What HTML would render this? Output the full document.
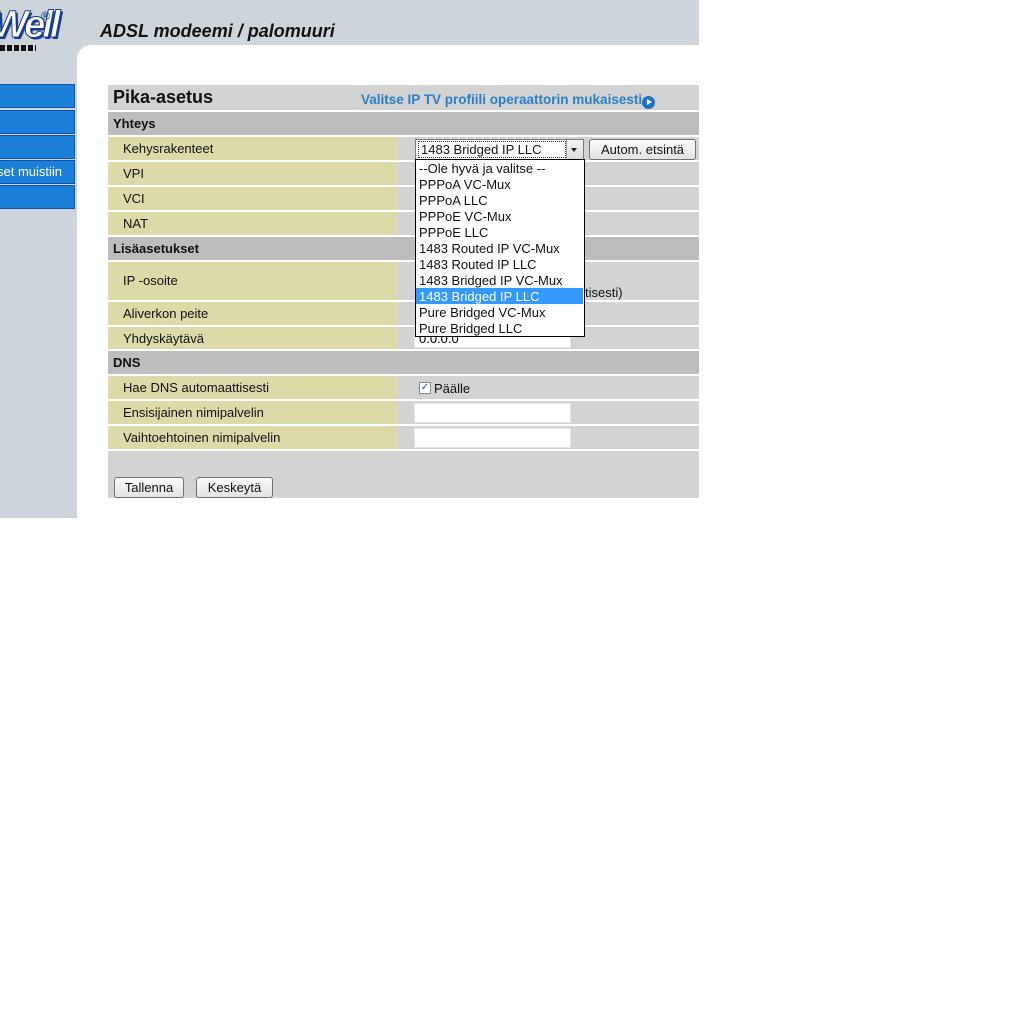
<!DOCTYPE html>
<html><head><meta charset="utf-8"><style>
*{margin:0;padding:0;box-sizing:border-box}
body{width:1024px;height:1024px;background:#fff;font-family:"Liberation Sans",Arial,sans-serif;position:relative;overflow:hidden}
.a{position:absolute}
#bg{left:0;top:0;width:699px;height:518px;background:#cdd4dc}
#panel{left:77px;top:45px;width:622px;height:473px;background:#fff;border-top-left-radius:14px}
.nav{left:0;width:75px;height:24px;background:#1b7fd8;border:1px solid #0f56a8;border-left:none;color:#fff;font-size:13px;line-height:22px}
.row{left:108px;width:591px;background:#d3d3d3}
.lab{left:108px;width:289px;background:#dcdaa9;font-size:13px;color:#111;padding-left:15px}
.sec{left:108px;width:591px;background:#bdbdbd;font-size:13px;font-weight:bold;color:#111;padding-left:5px}
.inp{background:#fff;border:1px solid #e4e4e4}
.btn{background:linear-gradient(#fbfbfb,#e3e3e3);border:1px solid #707070;border-radius:3px;font-size:13px;color:#111;text-align:center}
.opt{left:416px;width:167px;height:16px;font-size:13px;line-height:18px;padding-left:3px;color:#111}
</style></head><body>
<div class="a" id="bg"></div>
<div class="a" id="panel"></div>
<div class="a" style="left:-8px;top:4px;font-size:38px;font-weight:bold;font-style:italic;color:#fff;-webkit-text-stroke:1px #1a3f8a;letter-spacing:-3px;text-shadow:2px 2px 0 #1a3f8a">Well</div>
<div class="a" style="left:41px;top:9px;font-size:12px;font-weight:bold;color:#1a3f8a">®</div>
<div class="a" style="left:0;top:45px;width:36px;height:6px;background:repeating-linear-gradient(90deg,#111 0 5px,transparent 5px 7px)"></div>
<div class="a" style="left:100px;top:21px;font-size:18px;font-weight:bold;font-style:italic;color:#111">ADSL modeemi / palomuuri</div>

<div class="a nav" style="top:84px"></div>
<div class="a nav" style="top:110px"></div>
<div class="a nav" style="top:135px"></div>
<div class="a nav" style="top:160px;padding-left:0"><span style="margin-left:-3px">set muistiin</span></div>
<div class="a nav" style="top:185px"></div>

<div class="a row" style="top:85px;height:25px"></div>
<div class="a" style="left:113px;top:87px;font-size:18px;font-weight:bold;color:#111">Pika-asetus</div>
<div class="a" style="left:361px;top:92px;font-size:13.5px;font-weight:bold;color:#2a7fc6">Valitse IP TV profiili operaattorin mukaisesti</div>
<div class="a" style="left:642px;top:96px;width:13px;height:13px;border-radius:50%;background:#1c72c4"></div>
<div class="a" style="left:647px;top:99px;width:0;height:0;border-left:5px solid #fff;border-top:3.5px solid transparent;border-bottom:3.5px solid transparent"></div>

<div class="a sec" style="top:112px;height:23px;line-height:23px">Yhteys</div>
<div class="a row" style="top:137px;height:23px"></div><div class="a lab" style="top:137px;height:23px;line-height:24px">Kehysrakenteet</div>
<div class="a row" style="top:162px;height:23px"></div><div class="a lab" style="top:162px;height:23px;line-height:24px">VPI</div>
<div class="a row" style="top:187px;height:23px"></div><div class="a lab" style="top:187px;height:23px;line-height:24px">VCI</div>
<div class="a row" style="top:212px;height:23px"></div><div class="a lab" style="top:212px;height:23px;line-height:24px">NAT</div>
<div class="a sec" style="top:237px;height:23px;line-height:23px">Lisäasetukset</div>
<div class="a row" style="top:262px;height:38px"></div><div class="a lab" style="top:262px;height:38px;line-height:38px">IP -osoite</div>
<div class="a" style="left:585px;top:285px;font-size:13px;color:#111">tisesti)</div>
<div class="a row" style="top:302px;height:23px"></div><div class="a lab" style="top:302px;height:23px;line-height:24px">Aliverkon peite</div>
<div class="a row" style="top:327px;height:22px"></div><div class="a lab" style="top:327px;height:22px;line-height:23px">Yhdyskäytävä</div>
<div class="a inp" style="left:414px;top:328px;width:157px;height:20px;font-size:13px;line-height:20px;padding-left:4px">0.0.0.0</div>
<div class="a sec" style="top:351px;height:23px;line-height:23px">DNS</div>
<div class="a row" style="top:376px;height:23px"></div><div class="a lab" style="top:376px;height:23px;line-height:24px">Hae DNS automaattisesti</div>
<div class="a" style="left:419px;top:382px;width:12px;height:12px;background:#fff;border:1px solid #8a8a8a;font-size:10px;line-height:10px;text-align:center;color:#2a4a9a">✓</div>
<div class="a" style="left:434px;top:381px;font-size:13px;color:#111">Päälle</div>
<div class="a row" style="top:401px;height:23px"></div><div class="a lab" style="top:401px;height:23px;line-height:24px">Ensisijainen nimipalvelin</div>
<div class="a inp" style="left:414px;top:403px;width:157px;height:20px"></div>
<div class="a row" style="top:426px;height:23px"></div><div class="a lab" style="top:426px;height:23px;line-height:24px">Vaihtoehtoinen nimipalvelin</div>
<div class="a inp" style="left:414px;top:428px;width:157px;height:20px"></div>
<div class="a row" style="top:451px;height:47px"></div>
<div class="a btn" style="left:114px;top:477px;width:70px;height:21px;line-height:19px">Tallenna</div>
<div class="a btn" style="left:196px;top:477px;width:77px;height:21px;line-height:19px">Keskeytä</div>

<div class="a" style="left:415px;top:139px;width:169px;height:21px;background:#fff;border:1px solid #7a7a7a"></div>
<div class="a" style="left:418px;top:141px;width:148px;height:17px;border:1px dotted #333;font-size:13px;line-height:15px;padding-left:2px;color:#111">1483 Bridged IP LLC</div>
<div class="a" style="left:566px;top:140px;width:17px;height:19px;background:linear-gradient(#f4f4f4,#dcdcdc);border-left:1px solid #aaa"></div>
<div class="a" style="left:571px;top:148px;width:0;height:0;border-top:4px solid #222;border-left:3.5px solid transparent;border-right:3.5px solid transparent"></div>
<div class="a btn" style="left:589px;top:139px;width:107px;height:21px;line-height:19px">Autom. etsintä</div>

<div class="a" style="left:415px;top:159px;width:170px;height:178px;background:#fff;border:1px solid #000"></div>
<div class="a opt" style="top:160px">--Ole hyvä ja valitse --</div>
<div class="a opt" style="top:176px">PPPoA VC-Mux</div>
<div class="a opt" style="top:192px">PPPoA LLC</div>
<div class="a opt" style="top:208px">PPPoE VC-Mux</div>
<div class="a opt" style="top:224px">PPPoE LLC</div>
<div class="a opt" style="top:240px">1483 Routed IP VC-Mux</div>
<div class="a opt" style="top:256px">1483 Routed IP LLC</div>
<div class="a opt" style="top:272px">1483 Bridged IP VC-Mux</div>
<div class="a opt" style="top:288px;background:#3399ff;color:#fff">1483 Bridged IP LLC</div>
<div class="a opt" style="top:304px">Pure Bridged VC-Mux</div>
<div class="a opt" style="top:320px">Pure Bridged LLC</div>
</body></html>
